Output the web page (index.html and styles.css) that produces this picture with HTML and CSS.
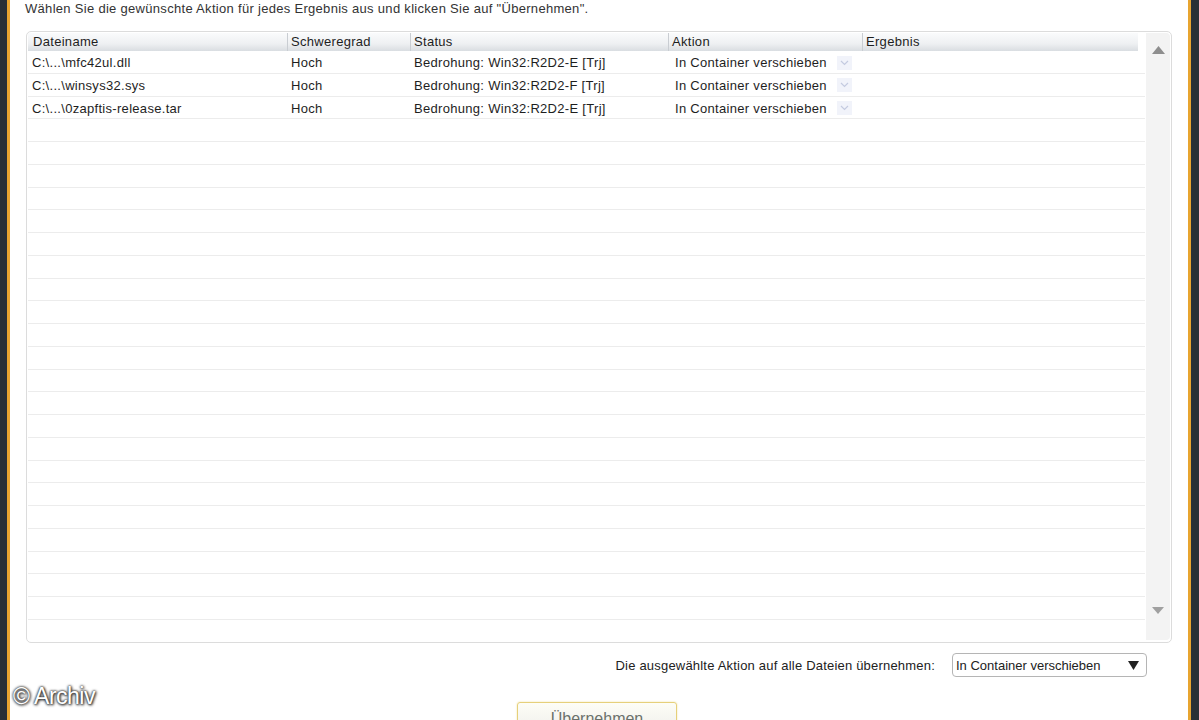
FILE: index.html
```html
<!doctype html>
<html lang="de">
    <head>
        <title>Ergebnisse</title>
        <meta charset="utf-8">
        <link rel="stylesheet" href="styles.css">
    </head>
    <body>
        <div class="frame-left"></div>
        <main class="panel">
            <p class="intro">Wählen Sie die gewünschte Aktion für jedes Ergebnis aus und klicken Sie auf "Übernehmen".</p>

            <div class="list-box">
                <div class="list">
                    <div class="list-head">
                        <div class="col c-name">Dateiname</div>
                        <div class="col c-level">Schweregrad</div>
                        <div class="col c-status">Status</div>
                        <div class="col c-action">Aktion</div>
                        <div class="col c-result">Ergebnis</div>
                    </div>
                    <div class="list-body" id="rows"></div>
                </div>
                <div class="scrollbar">
                    <span class="arrow up"><svg width="13" height="8" viewBox="0 0 13 8"><path d="M0 8 L6.5 0 L13 8 Z" fill="#8e8e8e"/></svg></span>
                    <span class="arrow down"><svg width="12" height="7" viewBox="0 0 12 7"><path d="M0 0 L6 7 L12 0 Z" fill="#a0a0a0"/></svg></span>
                </div>
            </div>

            <div class="apply-all">
                <span>Die ausgewählte Aktion auf alle Dateien übernehmen:</span>
                <div class="select">
                    <span>In Container verschieben</span>
                    <svg width="11" height="9" viewBox="0 0 11 9"><path d="M0 0 L11 0 L5.5 9 Z" fill="#222"/></svg>
                </div>
            </div>

            <div class="actions">
                <button class="apply">Übernehmen</button>
            </div>

            <div class="watermark">© Archiv</div>
        </main>
        <div class="frame-right"></div>

        <script>
            const data = [
                ['C:\\...\\mfc42ul.dll', 'Hoch', 'Bedrohung: Win32:R2D2-E [Trj]'],
                ['C:\\...\\winsys32.sys', 'Hoch', 'Bedrohung: Win32:R2D2-F [Trj]'],
                ['C:\\...\\0zapftis-release.tar', 'Hoch', 'Bedrohung: Win32:R2D2-E [Trj]']
            ]
            const rows = document.getElementById('rows')
            for (let i = 0; i < 25; i++) {
                const row = document.createElement('div')
                row.className = 'row'
                const d = data[i]
                if (d) {
                    row.innerHTML =
                        '<div class="col c-name">' + d[0] + '</div>' +
                        '<div class="col c-level">' + d[1] + '</div>' +
                        '<div class="col c-status">' + d[2] + '</div>' +
                        '<div class="col c-action">In Container verschieben <span class="mini-drop"><svg width="9" height="6" viewBox="0 0 9 6"><path d="M1 1 L4.5 4.5 L8 1" fill="none" stroke="#c4cbe0" stroke-width="1.2"/></svg></span></div>' +
                        '<div class="col c-result"></div>'
                }
                rows.appendChild(row)
            }
        </script>
    </body>
</html>
```

FILE: styles.css
```css
html, body {
    margin: 0;
    height: 720px;
    overflow: hidden;
}
body {
    display: flex;
    background: #fff;
    font-family: "Liberation Sans", Arial, sans-serif;
    font-size: 13px;
    letter-spacing: 0.3px;
    color: #1e1e1e;
}
.frame-left {
    width: 7px;
    background: #283036;
    border-right: 3px solid #e8a530;
}
.frame-right {
    width: 8px;
    background: #283036;
    border-left: 3px solid #e8a530;
}
.panel {
    flex: 1;
    position: relative;
    padding: 0 16px 0 16px;
}
.intro {
    margin: 1px 0 0 -1px;
    height: 15px;
    line-height: 15px;
    color: #333;
}
.list-box {
    margin-top: 15px;
    height: 607px;
    border: 1px solid #dcdcdc;
    border-radius: 5px;
    display: flex;
    padding: 1px 1px 2px 1px;
}
.list {
    flex: 1;
    display: flex;
    flex-direction: column;
}
.list-head {
    display: flex;
    height: 18px;
    margin-right: 7px;
    background: linear-gradient(#fafbfc, #eef0f2 60%, #d9dde1);
    line-height: 17px;
}
.col {
    flex: none;
    box-sizing: border-box;
    white-space: nowrap;
    overflow: hidden;
}
.list-head .col {
    padding-left: 3px;
    border-left: 1px solid #c9cdd2;
}
.list-head .col:first-child {
    border-left: none;
    padding-left: 5px;
}
.c-name { width: 259px; }
.c-level { width: 123px; }
.c-status { width: 258px; }
.c-action { width: 194px; }
.c-result { flex: 1; }
.list-body {
    flex: 1;
}
.row {
    display: flex;
    height: 22.75px;
    border-bottom: 1px solid #ececec;
    box-sizing: border-box;
    line-height: 23px;
}
.row .col {
    padding-left: 4px;
}
.row .c-action {
    padding-left: 7px;
}
.mini-drop {
    display: inline-flex;
    align-items: center;
    justify-content: center;
    width: 15px;
    height: 14px;
    margin-left: 6px;
    background: #f1f3fa;
    vertical-align: middle;
    position: relative;
    top: -1px;
}
.scrollbar {
    width: 24px;
    margin-left: 1px;
    background: #f3f3f3;
    border-radius: 0 4px 4px 0;
    display: flex;
    flex-direction: column;
    justify-content: space-between;
    align-items: center;
    padding: 13px 0 25px;
}
.arrow {
    display: block;
    height: 8px;
    line-height: 0;
}
.apply-all {
    display: flex;
    justify-content: flex-end;
    align-items: center;
    gap: 17px;
    margin-top: 10px;
    margin-right: 25px;
    color: #222;
    letter-spacing: 0.2px;
}
.select {
    width: 183px;
    height: 22px;
    border: 1px solid #b5b5b5;
    border-radius: 4px;
    display: flex;
    align-items: center;
    justify-content: space-between;
    padding: 0 7px 0 3px;
    background: #fff;
    letter-spacing: 0;
}
.actions {
    display: flex;
    justify-content: center;
    margin-top: 25px;
}
.apply {
    width: 160px;
    height: 30px;
    margin-left: -4px;
    border: 1px solid #e6d07a;
    border-radius: 3px;
    background: linear-gradient(#fdfdf6, #f0f0ec);
    font-family: "Liberation Sans", Arial, sans-serif;
    font-size: 16px;
    color: #6b716b;
    padding-top: 4px;
    box-shadow: 0 0 2px #f0e0a0;
}
.watermark {
    position: absolute;
    left: 3px;
    top: 683px;
    font-size: 23px;
    color: #fff;
    letter-spacing: -0.5px;
    text-shadow: 0 0 2px #333, 0 0 3px #333, 1px 1px 3px #222;
}
```
